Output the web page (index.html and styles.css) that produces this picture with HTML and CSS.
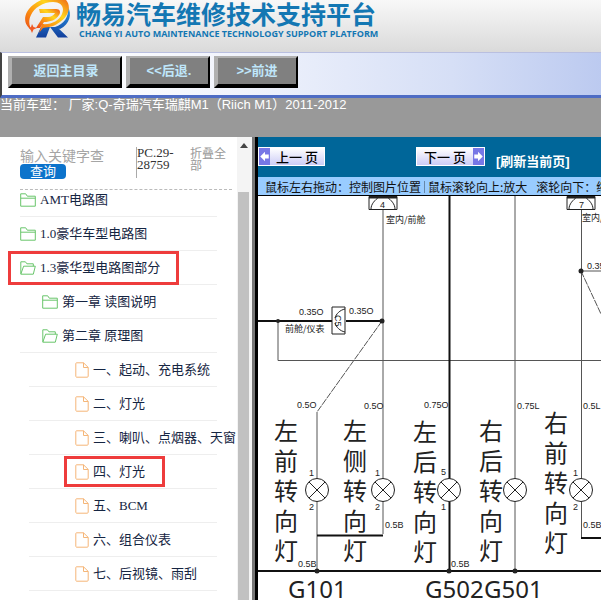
FILE: index.html
```html
<!DOCTYPE html>
<html lang="zh-CN">
<head>
<meta charset="utf-8">
<title>畅易汽车维修技术支持平台</title>
<link rel="stylesheet" href="styles.css">
</head>
<body>
<svg class="defs" aria-hidden="true">
  <symbol id="folder" viewBox="0 0 16 14"><path d="M.7 13.2V.8h5l1.6 2.4h8v10zM.7 5.2h14.6"/></symbol>
  <symbol id="folder-open" viewBox="0 0 16 14"><path d="M.8 12.8V.8h4.6l1.5 2h6.4v2.4M.8 13.2l2.8-8h11.7l-2 8z"/></symbol>
  <symbol id="file" viewBox="0 0 14 16"><path d="M1.5.8h7l4.7 4.6v8.8a1 1 0 0 1-1 1h-10.700a1 1 0 0 1-.7-1V1.500a.7.7 0 0 1 .7-.7zM8.500.8v4.700h4.700"/></symbol>
</svg>

<header class="brand">
  <svg class="logo" viewBox="0 0 48 40" aria-hidden="true">
    <defs>
      <linearGradient id="flame" x1="0" y1="1" x2="1" y2="0"><stop offset="0" stop-color="#e8431a"/><stop offset=".35" stop-color="#fb8f10"/><stop offset=".65" stop-color="#ffd51c"/><stop offset="1" stop-color="#ee5a16"/></linearGradient>
      <linearGradient id="steel" x1="0" y1="0" x2="0" y2="1"><stop offset="0" stop-color="#2c9be8"/><stop offset="1" stop-color="#123f9c"/></linearGradient>
    </defs>
    <path fill="url(#steel)" d="M11 37.500 16 27l9 0-4 10.500zM25 27h7l11 10.500H33zM30 27C39 24 44 17 43 7c4 7 2 17-8 22z"/>
    <path fill="url(#flame)" fill-rule="evenodd" d="M8 31C-3 25-2 13 8 5 18-3 33-6 40-1c7 6 4 17-5 23-5 4-10 5-17 6l-4 5 3-9c9 1 17-3 20-10 3-7-1-12-9-12C18 2 9 8 6 15c-3 6-2 12 2 16z"/>
    <path fill="url(#flame)" d="M14 9h17c4 0 5 3 3 6-3 5-9 7-15 7l-4 6h-4l7-11h5c3 0 6-2 7-4H15z"/>
    <path fill="#f15a24" d="m7 24 1.500 3 3.500 1-3.500 1.500L7 33l-1.500-3.500L4 28l2-1z"/>
  </svg>
  <div class="brand-text">
    <h1>畅易汽车维修技术支持平台</h1>
    <p>CHANG YI AUTO MAINTENANCE TECHNOLOGY SUPPORT PLATFORM</p>
  </div>
</header>

<nav class="toolbar">
  <button class="tool wide" type="button">返回主目录</button>
  <button class="tool" type="button">&lt;&lt;后退.</button>
  <button class="tool" type="button">&gt;&gt;前进</button>
</nav>
<p class="model">当前车型： 厂家:Q-奇瑞汽车瑞麒M1（Riich M1）2011-2012</p>

<main class="workspace">
  <aside class="sidebar">
    <div class="tree-pane">
      <div class="search">
        <form class="query">
          <input type="text" placeholder="输入关键字查" aria-label="输入关键字查">
          <button type="button">查询</button>
        </form>
        <div class="code">PC.29-28759</div>
        <a class="collapse" href="#">折叠全部</a>
      </div>
      <ul class="tree">
        <li class="first"><a href="#"><svg class="folder"><use href="#folder"/></svg>AMT电路图</a></li>
        <li><a href="#"><svg class="folder"><use href="#folder"/></svg>1.0豪华车型电路图</a></li>
        <li class="marked"><a href="#"><svg class="folder"><use href="#folder-open"/></svg>1.3豪华型电路图部分</a></li>
        <li class="chapter"><a href="#"><svg class="folder"><use href="#folder"/></svg>第一章 读图说明</a></li>
        <li class="chapter"><a href="#"><svg class="folder"><use href="#folder-open"/></svg>第二章 原理图</a></li>
        <li class="leaf"><a href="#"><svg class="file"><use href="#file"/></svg>一、起动、充电系统</a></li>
        <li class="leaf"><a href="#"><svg class="file"><use href="#file"/></svg>二、灯光</a></li>
        <li class="leaf"><a href="#"><svg class="file"><use href="#file"/></svg>三、喇叭、点烟器、天窗</a></li>
        <li class="leaf marked"><a href="#"><svg class="file"><use href="#file"/></svg>四、灯光</a></li>
        <li class="leaf"><a href="#"><svg class="file"><use href="#file"/></svg>五、BCM</a></li>
        <li class="leaf"><a href="#"><svg class="file"><use href="#file"/></svg>六、组合仪表</a></li>
        <li class="leaf"><a href="#"><svg class="file"><use href="#file"/></svg>七、后视镜、雨刮</a></li>
      </ul>
    </div>
    <div class="scrollbar" aria-hidden="true"><span class="up"></span><span class="thumb"></span></div>
  </aside>

  <section class="viewer">
    <div class="pager">
      <button class="page prev" type="button"><svg viewBox="0 0 11 18"><path d="M1 9l5-5v3h4v4H6v3z"/></svg><span>上一 页</span></button>
      <button class="page next" type="button"><span>下一 页</span><svg viewBox="0 0 11 18"><path d="M10 9L5 4v3H1v4h4v3z"/></svg></button>
      <a class="refresh" href="#">[刷新当前页]</a>
    </div>
    <p class="hint"><span>鼠标左右拖动：控制图片位置</span><i></i><span>鼠标滚轮向上:放大</span><span class="down">滚轮向下：缩小</span></p>
    <svg class="diagram" viewBox="258 196 343 404" preserveAspectRatio="xMinYMin slice" role="img" aria-label="灯光电路图">
      <defs>
        <g id="lamp"><circle r="11.500" fill="#fff"/><path d="M-8-8 8 8M8-8-8 8"/></g>
        <g id="plug"><path d="M-14-6.500h28v13h-28zM-12 6c0-5 4-9 8-12M12 6c0-5-4-9-8-12"/><path d="M-14-5.500h28" stroke-width="2"/></g>
      </defs>
      <g class="wire thin">
        <path d="M383 210V534M317 412V571M515 196V571M581.500 210V538M278 321v39.500h323"/>
        <path d="M382 321 317 412M581 271l20 43" stroke-dasharray="7 1"/>
        <path d="M581 271h20"/>
      </g>
      <g class="wire">
        <path d="M449.500 196V571M258 321h74M346 321h36M317 535.500h66M258 571h343M581 538h20"/>
      </g>
      <g class="node"><circle cx="278" cy="321" r="2"/><circle cx="382" cy="321" r="2.500"/><circle cx="581" cy="271" r="2.500"/><circle cx="317" cy="571" r="2.500"/><circle cx="449" cy="571" r="2.500"/><circle cx="515" cy="571" r="2.500"/></g>
      <g class="part">
        <use href="#plug" x="383" y="203"/><use href="#plug" x="581" y="203"/>
        <path d="M332 307h13v27h-13zM345 309c-5 1-9 5-10 9M345 332c-5-1-9-5-10-9" fill="#fff"/>
        <use href="#lamp" x="317" y="490"/><use href="#lamp" x="383" y="490"/><use href="#lamp" x="449" y="490"/><use href="#lamp" x="515" y="490"/><use href="#lamp" x="581" y="490"/>
      </g>
      <g class="tag">
        <text x="380" y="208">4</text><text x="579" y="208">7</text>
        <text transform="translate(335 315) rotate(90)">C5</text>
        <text x="299" y="315">0.35O</text><text x="349" y="314">0.35O</text><text x="587" y="269">0.35</text>
        <text x="297" y="408">0.5O</text><text x="364" y="409">0.5O</text><text x="424" y="408">0.75O</text><text x="517" y="409">0.75L</text><text x="583" y="409">0.5L</text>
        <text x="309" y="476">1</text><text x="309" y="510">2</text><text x="375" y="476">1</text><text x="375" y="510">2</text><text x="441" y="475">5</text><text x="441" y="510">1</text><text x="573" y="476">1</text><text x="573" y="510">2</text>
        <text x="385" y="528">0.5B</text><text x="298" y="567">0.5B</text><text x="451" y="567">0.5B</text><text x="583" y="528">0.5B</text>
      </g>
      <g class="note"><text x="386" y="223">室内/前舱</text><text x="582" y="221">室内/前舱</text><text x="285" y="332">前舱/仪表</text></g>
      <g class="name">
        <text><tspan x="274" y="440">左</tspan><tspan x="274" y="470">前</tspan><tspan x="274" y="500">转</tspan><tspan x="274" y="530">向</tspan><tspan x="274" y="560">灯</tspan></text>
        <text><tspan x="343" y="440">左</tspan><tspan x="343" y="470">侧</tspan><tspan x="343" y="500">转</tspan><tspan x="343" y="530">向</tspan><tspan x="343" y="560">灯</tspan></text>
        <text><tspan x="413" y="441">左</tspan><tspan x="413" y="471">后</tspan><tspan x="413" y="501">转</tspan><tspan x="413" y="531">向</tspan><tspan x="413" y="561">灯</tspan></text>
        <text><tspan x="479" y="440">右</tspan><tspan x="479" y="470">后</tspan><tspan x="479" y="500">转</tspan><tspan x="479" y="530">向</tspan><tspan x="479" y="560">灯</tspan></text>
        <text><tspan x="544" y="432">右</tspan><tspan x="544" y="462">前</tspan><tspan x="544" y="492">转</tspan><tspan x="544" y="522">向</tspan><tspan x="544" y="552">灯</tspan></text>
      </g>
      <g class="ground"><text x="288" y="598">G101</text><text x="425" y="598">G502</text><text x="484" y="598">G501</text></g>
    </svg>
  </section>
</main>
</body>
</html>
```
FILE: styles.css
```css
* { box-sizing: border-box; }
html, body { height: 100%; }
body { margin: 0; display: flex; flex-direction: column; overflow: hidden; background: #fff; font: 13px/16px "Liberation Sans", "Noto Sans CJK SC", sans-serif; }
h1, p, ul { margin: 0; padding: 0; }
a { color: inherit; text-decoration: none; }
button { font: inherit; padding: 0; white-space: nowrap; }
.defs { position: absolute; width: 0; height: 0; }

.brand { display: flex; flex: none; height: 52px; padding-left: 25px; gap: 3px; background: linear-gradient(#f8f8f8, #dadada); color: #1377b3; }
.logo { width: 48px; height: 40px; flex: none; }
.brand-text { white-space: nowrap; }
h1 { font: bold 25px/26px "Noto Sans CJK SC", sans-serif; }
.brand p { padding-left: 3px; font: bold 9px/16px "Open Sans", sans-serif; }

.toolbar { display: flex; flex: none; gap: 4px; height: 46px; padding: 3px 0 0 6px; border-top: 1px solid #b9bfe0; border-left: 2px solid #444; border-bottom: 3px solid #4e6cc4; background: linear-gradient(90deg, #fff 10%, #f0f3fc 40%, #d6dff6 75%, #bccaf0); }
.tool { width: 84px; height: 32px; border: solid; border-width: 2px 2px 4px 4px; border-color: #b0b0b0 #000 #000 #b0b0b0; background: #808080; color: #bfe6fa; font-weight: bold; }
.wide { width: 114px; }
.model { flex: none; height: 39px; line-height: 14px; background: #999; color: #fff; white-space: nowrap; }

.workspace { display: flex; flex: 1; min-height: 0; }
.sidebar { display: flex; flex: none; width: 258px; border-right: 3px solid #000; }
.tree-pane { flex: 1; min-width: 0; padding-left: 20px; }
.search { display: flex; height: 53px; margin-right: 5px; padding-top: 10px; border-bottom: 1px dashed #bbb; color: #999; }
.query { display: flex; flex-direction: column; align-items: flex-start; width: 116px; }
.query input { width: 90px; height: 17px; padding: 0; border: 0; background: none; color: #999; font: 14px/17px "Noto Sans CJK SC", sans-serif; }
.query input::placeholder { color: #a5a5a5; opacity: 1; }
.query button { width: 46px; height: 15px; border: 0; border-radius: 4px; background: #0c73cb; color: #fff; line-height: 15px; }
.code { width: 54px; height: 31px; border-left: 1px solid #aaa; color: #333; font: 13px/12px "Liberation Serif", serif; }
.collapse { width: 38px; font: 12px/12px "Noto Sans CJK SC", sans-serif; }

.tree { list-style: none; color: #152542; font: 13px/16px "Liberation Serif", "Noto Sans CJK SC", serif; }
.tree li { position: relative; height: 34px; margin-right: 20px; border-bottom: 1px solid #eee; white-space: nowrap; }
.tree a { display: flex; align-items: center; height: 33px; }
.tree .first { height: 27px; }
.tree .first a { height: 20px; }
.tree svg { flex: none; fill: none; }
.folder { width: 16px; height: 14px; margin-right: 4px; stroke: #69c56b; }
.file { width: 14px; height: 16px; margin-right: 4px; stroke: #f5b678; }
.chapter a { padding-left: 22px; }
.tree .leaf { margin-left: 9px; }
.leaf a { padding-left: 46px; }
.marked::after { content: ""; position: absolute; inset: 0 38px -1px -12px; border: 3px solid #ee3c3c; }
.leaf.marked::after { inset: 1px 52px 1px 35px; }

.scrollbar { display: flex; flex-direction: column; flex: none; width: 18px; padding: 6px 3px 0 1px; border-right: 3px solid #777; background: #f4f4f4; }
.up { align-self: center; border: solid transparent; border-width: 0 4px 5px; border-bottom-color: #444; }
.thumb { flex: 1; margin-top: 44px; background: #c1c1c1; }

.viewer { display: flex; flex: 1; flex-direction: column; min-width: 0; background: #fff; }
.pager { display: flex; flex: none; height: 40px; padding-top: 10px; background: #006699; color: #fff; white-space: nowrap; }
.page { display: flex; align-items: center; height: 19px; border: 1px solid #fff; background: linear-gradient(#fff, #ccccf6); color: #000; font: 500 13px/16px "Noto Sans CJK SC", sans-serif; }
.page span { flex: 1; }
.page svg { width: 11px; height: 17px; background: #7777e6; fill: #fff; }
.prev { width: 67px; }
.next { width: 69px; margin-left: 91px; }
.refresh { margin: 7px 0 0 11px; font-weight: bold; }
.hint { display: flex; flex: none; height: 19px; padding-left: 7px; overflow: hidden; background: #99ccff; border-bottom: 1px solid #000; color: #111; font: 12px/19px "Noto Sans CJK SC", sans-serif; white-space: nowrap; }
.hint i { width: 1px; height: 12px; margin: 4px 3px; background: #6688aa; flex: none; }
.hint span { flex: none; }
.down { margin-left: 9px; }

.diagram { display: block; flex: 1; width: 100%; min-height: 0; fill: #222; }
.wire, .part { fill: none; stroke: #111; stroke-width: 2px; }
.thin, .part { stroke: #555; stroke-width: 1px; }
.part { stroke: #222; }
.tag { font: 9px "Liberation Sans", sans-serif; }
.note { font: 9px "Noto Sans CJK SC", sans-serif; }
.name { font: 24px "Noto Sans CJK SC", sans-serif; }
.ground { font: 24px "Noto Sans", sans-serif; }
```
